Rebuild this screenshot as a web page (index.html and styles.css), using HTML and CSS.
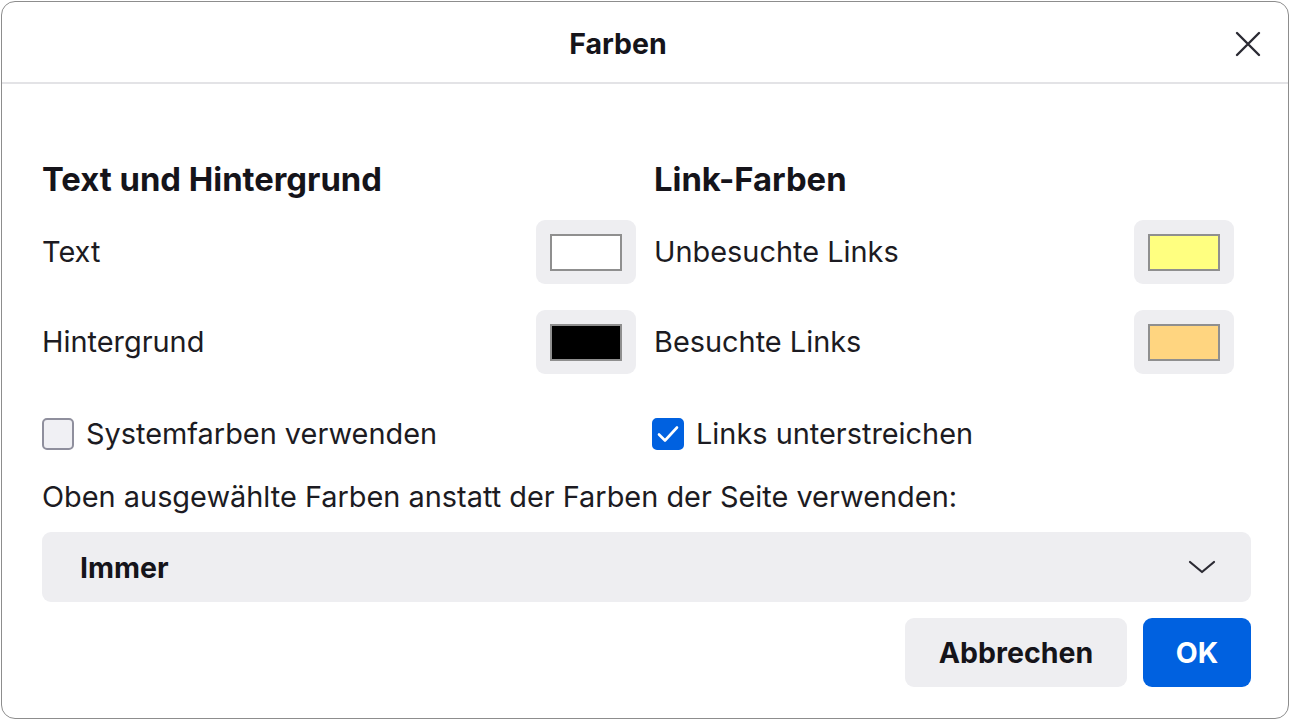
FILE: index.html
```html
<!DOCTYPE html>
<html lang="de">
<head>
<meta charset="utf-8">
<title>Farben</title>
<link rel="stylesheet" href="styles.css">
</head>
<body>
<div class="dialog">
  <header class="dialog-header">
    <h1 class="dialog-title">Farben</h1>
    <button class="close-btn" aria-label="Schließen">
      <svg width="26" height="26" viewBox="0 0 26 26"><path d="M2 2 L24 24 M24 2 L2 24" stroke="#2b2a33" stroke-width="2.4" stroke-linecap="round" fill="none"/></svg>
    </button>
  </header>
  <main class="dialog-body">
    <div class="columns">
      <section class="col col-left">
        <h2 class="section-title">Text und Hintergrund</h2>
        <div class="color-row">
          <span class="row-label">Text</span>
          <button class="swatch-btn"><span class="swatch swatch-white"></span></button>
        </div>
        <div class="color-row">
          <span class="row-label">Hintergrund</span>
          <button class="swatch-btn"><span class="swatch swatch-black"></span></button>
        </div>
        <label class="check-row">
          <span class="checkbox"></span>
          <span class="check-label">Systemfarben verwenden</span>
        </label>
      </section>
      <section class="col col-right">
        <h2 class="section-title">Link-Farben</h2>
        <div class="color-row">
          <span class="row-label">Unbesuchte Links</span>
          <button class="swatch-btn"><span class="swatch swatch-yellow"></span></button>
        </div>
        <div class="color-row">
          <span class="row-label">Besuchte Links</span>
          <button class="swatch-btn"><span class="swatch swatch-orange"></span></button>
        </div>
        <label class="check-row">
          <span class="checkbox checked">
            <svg width="24" height="20" viewBox="0 0 24 20"><path d="M3 10.5 L9 16.5 L21 3.5" stroke="#fff" stroke-width="2.6" fill="none" stroke-linecap="round" stroke-linejoin="round"/></svg>
          </span>
          <span class="check-label">Links unterstreichen</span>
        </label>
      </section>
    </div>
    <p class="override-label">Oben ausgewählte Farben anstatt der Farben der Seite verwenden:</p>
    <div class="select">
      <span class="select-value">Immer</span>
      <svg class="chevron" width="28" height="16" viewBox="0 0 28 16"><path d="M2 3 L14 13 L26 3" stroke="#2b2a33" stroke-width="2.2" fill="none" stroke-linecap="round" stroke-linejoin="round"/></svg>
    </div>
    <div class="actions">
      <button class="btn btn-secondary">Abbrechen</button>
      <button class="btn btn-primary">OK</button>
    </div>
  </main>
</div>
</body>
</html>
```

FILE: styles.css
```css
* { box-sizing: border-box; }

html, body {
  margin: 0;
  padding: 0;
  background: #ffffff;
}

body {
  font-family: "Inter", "Noto Sans", "Liberation Sans", sans-serif;
  color: #15141a;
  padding: 1px 0 0 1px;
}

.dialog {
  width: 1288px;
  height: 718px;
  border: 1.5px solid #8d8d8d;
  border-radius: 14px;
  background: #fff;
  overflow: hidden;
}

.dialog-header {
  position: relative;
  height: 82px;
  border-bottom: 2px solid #e3e3e6;
  display: flex;
  align-items: center;
  justify-content: center;
  padding-right: 54px;
}

.dialog-title {
  margin: 0;
  font-size: 28.5px;
  font-weight: 650;
  line-height: 34px;
  padding-top: 4px;
}

.close-btn {
  position: absolute;
  right: 27px;
  top: 29px;
  width: 26px;
  height: 26px;
  padding: 0;
  border: 0;
  background: none;
  display: flex;
}

.dialog-body {
  padding: 77px 37px 0 40px;
}

.columns {
  display: flex;
  gap: 18px;
}

.col-left { width: 594px; }
.col-right { width: 580px; }

.section-title {
  margin: 0 0 23px;
  font-size: 32.8px;
  font-weight: 700;
  line-height: 36px;
}

.color-row {
  display: flex;
  align-items: center;
  justify-content: space-between;
  height: 64px;
  margin-bottom: 26px;
}

.row-label,
.check-label,
.override-label {
  font-size: 28.9px;
  line-height: 34px;
  color: #1c1b22;
}

.swatch-btn {
  width: 100px;
  height: 64px;
  border: 0;
  border-radius: 9px;
  background: #eeeef1;
  display: flex;
  align-items: center;
  justify-content: center;
  padding: 0;
}

.swatch {
  width: 72px;
  height: 37px;
  border: 2px solid #8f8f8f;
}

.swatch-white { background: #ffffff; }
.swatch-black { background: #000000; }
.swatch-yellow { background: #ffff80; }
.swatch-orange { background: #ffd580; }

.check-row {
  display: flex;
  align-items: center;
  gap: 12px;
  margin-top: 44px;
  height: 32px;
}

.checkbox {
  width: 32px;
  height: 32px;
  border: 2px solid #8f8f9d;
  border-radius: 5px;
  background: #f0f0f4;
  display: flex;
  align-items: center;
  justify-content: center;
  flex: none;
}

.checkbox.checked {
  background: #0061e0;
  border-color: #0061e0;
}

.col-right .check-row { margin-left: -2px; }

.override-label {
  margin: 30px 0 18px;
}

.select {
  height: 70px;
  border-radius: 9px;
  background: #eeeef1;
  display: flex;
  align-items: center;
  justify-content: space-between;
  padding: 0 35px 0 38px;
}

.select-value {
  font-size: 28.5px;
  font-weight: 700;
}

.actions {
  display: flex;
  justify-content: flex-end;
  gap: 16px;
  margin-top: 16px;
}

.btn {
  height: 69px;
  border: 0;
  border-radius: 9px;
  font-family: inherit;
  font-size: 28.5px;
  font-weight: 700;
  padding: 0;
}

.btn-secondary {
  width: 222px;
  background: #eeeef1;
  color: #15141a;
}

.btn-primary {
  width: 108px;
  background: #0061e0;
  color: #fff;
}
```
